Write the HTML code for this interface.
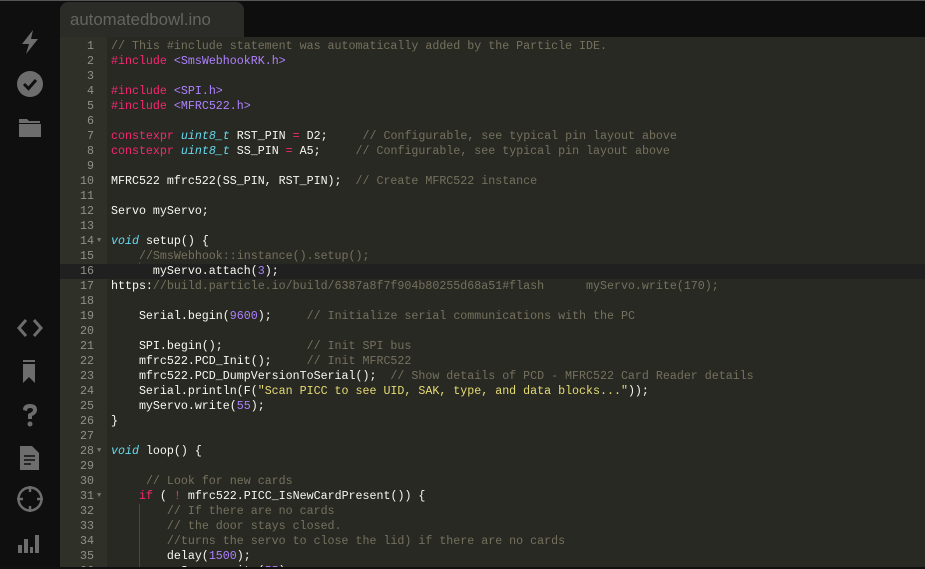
<!DOCTYPE html>
<html><head><meta charset="utf-8"><style>
*{margin:0;padding:0;box-sizing:border-box}
html,body{width:925px;height:569px;overflow:hidden;background:#0e0e0e}
.top{position:absolute;left:0;top:0;width:925px;height:1px;background:#555}
.side{position:absolute;left:0;top:1px;width:60px;height:568px;background:#0f0f0f}
.side svg{position:absolute;left:16px}
.tab{position:absolute;left:60px;top:2px;width:184px;height:36px;background:#2b2b27;border-radius:8px 8px 0 0;color:#65655f;font:16.8px "Liberation Sans",sans-serif;padding:8px 0 0 10px}
.ed{position:absolute;left:60px;top:37px;width:865px;height:530px;background:#282923;overflow:hidden}
.gut{position:absolute;left:0;top:0;width:47px;height:100%;background:#2f3129}
.bot{position:absolute;left:0;top:567px;width:925px;height:2px;background:#111}
.wrap{position:absolute;left:0;top:2px;width:865px;height:540px}
.ln{position:absolute;left:0;width:865px;height:15px;font:11.65px/15px "Liberation Mono",monospace;color:#f8f8f2;white-space:pre}
.ln.hl{background:#202020}
.ln .n{position:absolute;left:0;width:34px;text-align:right;color:#8f908a}
.ln .f{position:absolute;left:37px;top:0;color:#777;font-size:7px}
.ln .c{position:absolute;left:51px}
.cm{color:#75715e}.kw{color:#f92672}.ty{color:#66d9ef;font-style:italic}.st{color:#e6db74}.nu{color:#ae81ff}.pa{color:#ae81ff}
.g{position:absolute;width:1px;background:#464741}
</style></head><body>
<div class="top"></div>
<div class="side">
<svg style="top:27px" width="28" height="28" viewBox="0 0 28 28"><path d="M17 2 L6 16 H13 L10 26 L22 11 H15 Z" fill="#6d6d6d"/></svg>
<svg style="top:69px" width="28" height="28" viewBox="0 0 28 28"><circle cx="14" cy="14" r="13" fill="#6d6d6d"/><path d="M8 14 L12.5 18.5 L20 10" stroke="#0f0f0f" stroke-width="3" fill="none"/></svg>
<svg style="top:114px" width="28" height="26" viewBox="0 0 28 26"><path d="M3 4 H11 L13 6 H24 V8 H3 Z M3 9 H25 V22 H3 Z" fill="#6d6d6d"/></svg>
<svg style="top:315px" width="28" height="24" viewBox="0 0 28 24"><path d="M10 4 L3 12 L10 20 M18 4 L25 12 L18 20" stroke="#6d6d6d" stroke-width="3" fill="none"/></svg>
<svg style="top:358px" width="28" height="26" viewBox="0 0 28 26"><path d="M7 1 H19 V3 H7 Z M7 5 H19 V24 L13 18 L7 24 Z" fill="#6d6d6d"/></svg>
<svg style="top:400px" width="28" height="28" viewBox="0 0 28 28"><path d="M7 9 Q7 3 14 3 Q21 3 21 9 Q21 13 16 15 V18 H12 V13 Q17 11 17 9 Q17 7 14 7 Q11 7 11 10 Z" fill="#6d6d6d"/><circle cx="14" cy="23" r="2.5" fill="#6d6d6d"/></svg>
<svg style="top:443px" width="28" height="28" viewBox="0 0 28 28"><path d="M4 2 H16 L23 9 V26 H4 Z" fill="#6d6d6d"/><path d="M8 12 H19 M8 16 H19 M8 20 H15" stroke="#0f0f0f" stroke-width="1.5"/></svg>
<svg style="top:484px" width="28" height="28" viewBox="0 0 28 28"><circle cx="14" cy="14" r="11.5" stroke="#6d6d6d" stroke-width="2.5" fill="none"/><path d="M14 1 V7 M14 21 V27 M1 14 H7 M21 14 H27" stroke="#6d6d6d" stroke-width="2.5"/></svg>
<svg style="top:528px" width="28" height="26" viewBox="0 0 28 26"><path d="M2 16 H6 V24 H2 Z M8 10 H12 V24 H8 Z M14 18 H17 V24 H14 Z M19 6 H23 V24 H19 Z" fill="#6d6d6d"/></svg>
</div>
<div class="tab">automatedbowl.ino</div>
<div class="ed">
<div class="gut"></div>
<div class="wrap">
<div class="g" style="left:79px;top:223px;height:15px"></div>
<div class="g" style="left:79px;top:465px;height:70px"></div>
<div class="ln" style="top:0px"><span class="n">1</span><span class="c"><span class="cm">// This #include statement was automatically added by the Particle IDE.</span></span></div>
<div class="ln" style="top:15px"><span class="n">2</span><span class="c"><span class="kw">#include</span> <span class="pa">&lt;SmsWebhookRK.h&gt;</span></span></div>
<div class="ln" style="top:30px"><span class="n">3</span></div>
<div class="ln" style="top:45px"><span class="n">4</span><span class="c"><span class="kw">#include</span> <span class="pa">&lt;SPI.h&gt;</span></span></div>
<div class="ln" style="top:60px"><span class="n">5</span><span class="c"><span class="kw">#include</span> <span class="pa">&lt;MFRC522.h&gt;</span></span></div>
<div class="ln" style="top:75px"><span class="n">6</span></div>
<div class="ln" style="top:90px"><span class="n">7</span><span class="c"><span class="kw">constexpr</span> <span class="ty">uint8_t</span> RST_PIN <span class="kw">=</span> D2;     <span class="cm">// Configurable, see typical pin layout above</span></span></div>
<div class="ln" style="top:105px"><span class="n">8</span><span class="c"><span class="kw">constexpr</span> <span class="ty">uint8_t</span> SS_PIN <span class="kw">=</span> A5;     <span class="cm">// Configurable, see typical pin layout above</span></span></div>
<div class="ln" style="top:120px"><span class="n">9</span></div>
<div class="ln" style="top:135px"><span class="n">10</span><span class="c">MFRC522 mfrc522(SS_PIN, RST_PIN);  <span class="cm">// Create MFRC522 instance</span></span></div>
<div class="ln" style="top:150px"><span class="n">11</span></div>
<div class="ln" style="top:165px"><span class="n">12</span><span class="c">Servo myServo;</span></div>
<div class="ln" style="top:180px"><span class="n">13</span></div>
<div class="ln" style="top:195px"><span class="n">14</span><span class="f">▼</span><span class="c"><span class="ty">void</span> setup() {</span></div>
<div class="ln" style="top:210px"><span class="n">15</span><span class="c">    <span class="cm">//SmsWebhook::instance().setup();</span></span></div>
<div class="ln hl" style="top:225px"><span class="n">16</span><span class="c">      myServo.attach(<span class="nu">3</span>);</span></div>
<div class="ln" style="top:240px"><span class="n">17</span><span class="c">https:<span class="cm">//build.particle.io/build/6387a8f7f904b80255d68a51#flash      myServo.write(170);</span></span></div>
<div class="ln" style="top:255px"><span class="n">18</span></div>
<div class="ln" style="top:270px"><span class="n">19</span><span class="c">    Serial.begin(<span class="nu">9600</span>);     <span class="cm">// Initialize serial communications with the PC</span></span></div>
<div class="ln" style="top:285px"><span class="n">20</span></div>
<div class="ln" style="top:300px"><span class="n">21</span><span class="c">    SPI.begin();            <span class="cm">// Init SPI bus</span></span></div>
<div class="ln" style="top:315px"><span class="n">22</span><span class="c">    mfrc522.PCD_Init();     <span class="cm">// Init MFRC522</span></span></div>
<div class="ln" style="top:330px"><span class="n">23</span><span class="c">    mfrc522.PCD_DumpVersionToSerial();  <span class="cm">// Show details of PCD - MFRC522 Card Reader details</span></span></div>
<div class="ln" style="top:345px"><span class="n">24</span><span class="c">    Serial.println(F(<span class="st">"Scan PICC to see UID, SAK, type, and data blocks..."</span>));</span></div>
<div class="ln" style="top:360px"><span class="n">25</span><span class="c">    myServo.write(<span class="nu">55</span>);</span></div>
<div class="ln" style="top:375px"><span class="n">26</span><span class="c">}</span></div>
<div class="ln" style="top:390px"><span class="n">27</span></div>
<div class="ln" style="top:405px"><span class="n">28</span><span class="f">▼</span><span class="c"><span class="ty">void</span> loop() {</span></div>
<div class="ln" style="top:420px"><span class="n">29</span></div>
<div class="ln" style="top:435px"><span class="n">30</span><span class="c">     <span class="cm">// Look for new cards</span></span></div>
<div class="ln" style="top:450px"><span class="n">31</span><span class="f">▼</span><span class="c">    <span class="kw">if</span> ( <span class="kw">!</span> mfrc522.PICC_IsNewCardPresent()) {</span></div>
<div class="ln" style="top:465px"><span class="n">32</span><span class="c">        <span class="cm">// If there are no cards</span></span></div>
<div class="ln" style="top:480px"><span class="n">33</span><span class="c">        <span class="cm">// the door stays closed.</span></span></div>
<div class="ln" style="top:495px"><span class="n">34</span><span class="c">        <span class="cm">//turns the servo to close the lid) if there are no cards</span></span></div>
<div class="ln" style="top:510px"><span class="n">35</span><span class="c">        delay(<span class="nu">1500</span>);</span></div>
<div class="ln" style="top:525px"><span class="n">36</span><span class="c">        myServo.write(<span class="nu">55</span>);</span></div>
</div>
</div>
<div class="bot"></div>
</body></html>
